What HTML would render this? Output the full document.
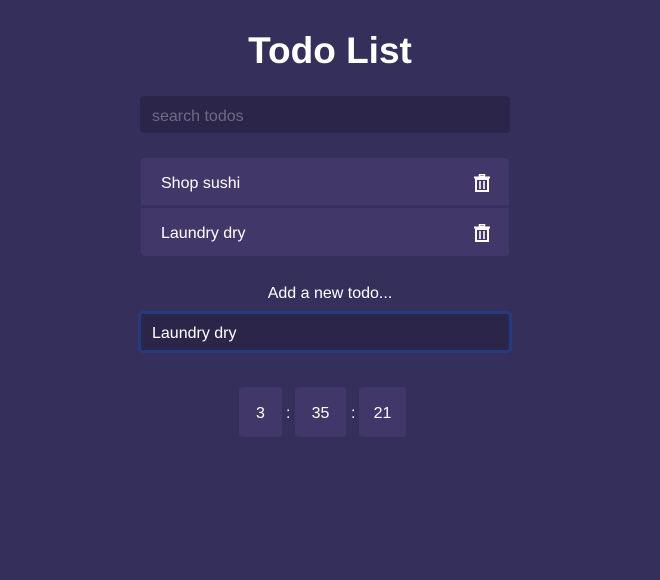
<!DOCTYPE html>
<html><head><style>
body{margin:0;width:660px;height:580px;background:#352f5b;font-family:"Liberation Sans",sans-serif;color:#fff;position:relative;overflow:hidden}
.a{position:absolute}
h1{position:absolute;top:27px;left:0;width:660px;text-align:center;margin:0;font-size:37px;font-weight:bold;font-family:"Liberation Sans",sans-serif;line-height:48px}
.search{left:140px;top:96px;width:370px;height:37px;background:#2b2649;border-radius:4px;color:#6e6a85;font-size:16px;line-height:41px;box-sizing:border-box;padding-left:12px}
.item{left:141px;width:368px;height:48px;background:#413768;font-size:16px;line-height:51px;box-sizing:border-box;padding-left:20px}
.tr{position:absolute;right:19px;top:16px}
.add{left:0;width:660px;top:285px;text-align:center;font-size:16px}
.inp{left:138px;top:311px;width:374px;height:42px;background:#2b2649;border:3px solid #253b80;border-radius:5px;box-sizing:border-box;padding-left:11px;font-size:16px;line-height:40px}
.t{top:387px;height:50px;background:#413768;border-radius:4px;text-align:center;line-height:53px;font-size:16px}
.c{top:387px;line-height:53px;font-size:16px}
</style></head><body>
<h1>Todo List</h1>
<div class="a search">search todos</div>
<div class="a item" style="top:158px;border-radius:4px 4px 0 0;border-bottom:1px solid #3a315e">Shop sushi<svg class="tr" width="16" height="18" viewBox="0 0 16 18"><rect x="5.5" y="0.5" width="5" height="2" fill="none" stroke="#fff" stroke-width="1.5"/><rect x="0" y="2.5" width="16" height="2" fill="#fff"/><path d="M2 5h12v12H2z" fill="none" stroke="#fff" stroke-width="2"/><path d="M6 7v8M10 7v8" stroke="#fff" stroke-width="1.6"/></svg></div>
<div class="a item" style="top:208px;border-radius:0 0 4px 4px">Laundry dry<svg class="tr" width="16" height="18" viewBox="0 0 16 18"><rect x="5.5" y="0.5" width="5" height="2" fill="none" stroke="#fff" stroke-width="1.5"/><rect x="0" y="2.5" width="16" height="2" fill="#fff"/><path d="M2 5h12v12H2z" fill="none" stroke="#fff" stroke-width="2"/><path d="M6 7v8M10 7v8" stroke="#fff" stroke-width="1.6"/></svg></div>
<div class="a add">Add a new todo...</div>
<div class="a inp">Laundry dry</div>
<div class="a t" style="left:239px;width:43px">3</div>
<div class="a c" style="left:286px">:</div>
<div class="a t" style="left:295px;width:51px">35</div>
<div class="a c" style="left:351px">:</div>
<div class="a t" style="left:359px;width:47px">21</div>
</body></html>
